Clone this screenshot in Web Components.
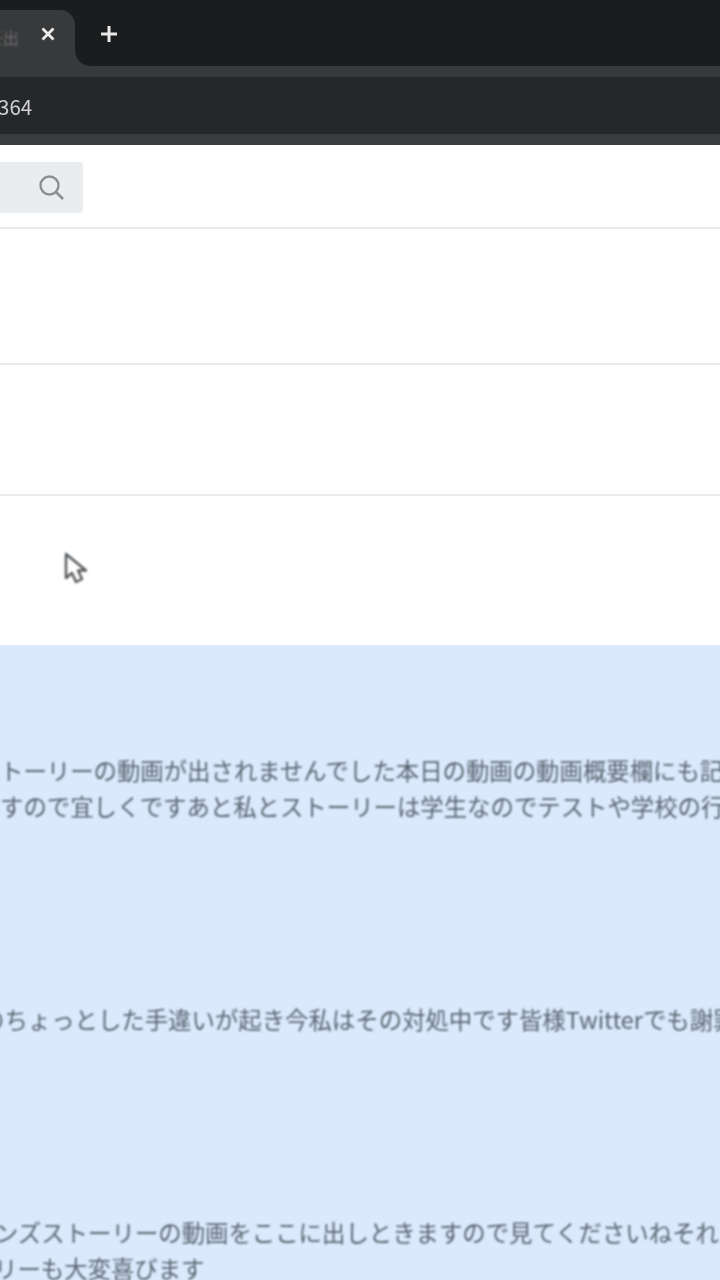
<!DOCTYPE html>
<html lang="ja">
<head>
<meta charset="utf-8">
<title>reference</title>
<style>
  html, body { margin: 0; background: #fff; }
  body {
    width: 720px;
    height: 1280px;
    overflow: hidden;
    position: relative;
    font-family: "Noto Sans CJK JP", "Noto Sans", sans-serif;
  }
</style>
</head>
<body>
<browser-chrome address="364" tab-title="任出"></browser-chrome>
<site-search></site-search>
<empty-row height="136"></empty-row>
<empty-row height="131"></empty-row>
<empty-row height="149" last></empty-row>
<message-panel>
  <message-text top="107" shift="0">トーリーの動画が出されませんでした本日の動画の動画概要欄にも記</message-text>
  <message-text top="0" shift="0">すので宜しくですあと私とストーリーは学生なのでテストや学校の行</message-text>
  <message-text top="177" shift="-19">のちょっとした手違いが起き今私はその対処中です皆様Twitterでも謝罪</message-text>
  <message-text top="177" shift="-5">ンズストーリーの動画をここに出しときますので見てくださいねそれ</message-text>
  <message-text top="0" shift="-6">リーも大変喜びます</message-text>
</message-panel>
<mouse-cursor></mouse-cursor>

<script>
class BrowserChrome extends HTMLElement {
  constructor() {
    super();
    this.attachShadow({ mode: 'open' });
  }

  connectedCallback() {
    const address = this.getAttribute('address') || '';
    const tabTitle = this.getAttribute('tab-title') || '';
    this.shadowRoot.innerHTML = `
      <style>
        :host { display: block; overflow: hidden; }
        .strip { display: flex; height: 66px; background: #1b1c1d; }
        .tab {
          position: relative;
          display: flex;
          align-items: center;
          width: 75px;
          height: 56px;
          margin-top: 10px;
          background: #38393a;
          border-radius: 0 15px 0 0;
        }
        .tab::after {
          content: '';
          position: absolute;
          left: 100%;
          bottom: 0;
          width: 15px;
          height: 15px;
          background: radial-gradient(circle at 100% 0, transparent 14px, #38393a 15.5px);
        }
        .title {
          width: 19px;
          overflow: hidden;
          white-space: nowrap;
          direction: rtl;
          font-size: 16px;
          color: #6e6f71;
          margin-bottom: 2px;
          filter: blur(0.8px);
        }
        .close { display: flex; margin-left: 21px; margin-bottom: 9px; filter: blur(0.7px); }
        .new { display: flex; margin: 24px 0 0 24px; height: 20px; filter: blur(0.7px); }
        .toolbar {
          height: 57px;
          border-top: 11px solid #38393a;
          border-bottom: 11px solid #3a3b3c;
          background: #26272a;
          display: flex;
          align-items: center;
          overflow: hidden;
          white-space: nowrap;
          font-size: 20.5px;
          color: #cfd0d0;
        }
        .toolbar span { margin-left: -2px; filter: blur(0.7px); }
      </style>
      <div class="strip">
        <div class="tab">
          <span class="title">${tabTitle}</span>
          <span class="close">
            <svg width="16" height="16" viewBox="0 0 16 16"><path d="M2.5 2.5l11 11M13.5 2.5l-11 11" stroke="#ececec" stroke-width="2.8" fill="none"/></svg>
          </span>
        </div>
        <span class="new">
          <svg width="20" height="20" viewBox="0 0 20 20"><path d="M10 2v16M2 10h16" stroke="#e8e8e8" stroke-width="3" fill="none"/></svg>
        </span>
      </div>
      <div class="toolbar"><span>${address}</span></div>
    `;
  }
}

class SiteSearch extends HTMLElement {
  constructor() {
    super();
    this.attachShadow({ mode: 'open' });
    this.shadowRoot.innerHTML = `
      <style>
        :host {
          display: block;
          box-sizing: border-box;
          height: 84px;
          padding-top: 17px;
          background: #fff;
          border-bottom: 2px solid #ebebeb;
        }
        .box {
          display: flex;
          align-items: center;
          justify-content: flex-end;
          box-sizing: border-box;
          width: 83px;
          height: 51px;
          padding: 0 18px 2px 0;
          background: #e9edf0;
          border-radius: 0 4px 4px 0;
        }
        svg { filter: blur(0.6px); }
      </style>
      <div class="box">
        <svg width="28" height="28" viewBox="0 0 28 28">
          <circle cx="12.5" cy="12.5" r="9" stroke="#8b8f92" stroke-width="2.4" fill="none"/>
          <path d="M19 19l7 7" stroke="#8b8f92" stroke-width="2.6" fill="none"/>
        </svg>
      </div>
    `;
  }
}

class EmptyRow extends HTMLElement {
  constructor() {
    super();
    this.attachShadow({ mode: 'open' });
    this.shadowRoot.innerHTML = `
      <style>
        :host {
          display: block;
          box-sizing: border-box;
          background: #fff;
          border-bottom: 2px solid #ebebeb;
        }
        :host([last]) { border-bottom: 0; }
      </style>
    `;
  }

  connectedCallback() {
    this.style.height = (this.getAttribute('height') || 100) + 'px';
  }
}

class MessagePanel extends HTMLElement {
  constructor() {
    super();
    this.attachShadow({ mode: 'open' });
    this.shadowRoot.innerHTML = `
      <style>
        :host {
          display: block;
          height: 635px;
          overflow: hidden;
          background: #dbe9fd;
        }
      </style>
      <slot></slot>
    `;
  }
}

class MessageText extends HTMLElement {
  constructor() {
    super();
    this.attachShadow({ mode: 'open' });
    this.shadowRoot.innerHTML = `
      <style>
        :host {
          display: block;
          height: 36px;
          line-height: 36px;
          white-space: nowrap;
          font-size: 23.4px;
          color: #5a6570;
          filter: blur(0.8px);
        }
      </style>
      <slot></slot>
    `;
  }

  connectedCallback() {
    this.style.marginTop = (this.getAttribute('top') || 0) + 'px';
    this.style.marginLeft = (this.getAttribute('shift') || 0) + 'px';
  }
}

// pointer sits over the page, so it is the one absolute item
class MouseCursor extends HTMLElement {
  constructor() {
    super();
    this.attachShadow({ mode: 'open' });
    this.shadowRoot.innerHTML = `
      <style>
        :host {
          display: block;
          position: absolute;
          left: 64px;
          top: 551px;
          width: 26px;
          height: 36px;
          filter: blur(1px);
        }
      </style>
      <svg width="26" height="36" viewBox="0 0 26 36">
        <path d="M2 3v24l6-5 4 9 6-3-4-8.5h8z" fill="#fff" stroke="#55585b" stroke-width="2.4" stroke-linejoin="round"/>
      </svg>
    `;
  }
}

customElements.define('browser-chrome', BrowserChrome);
customElements.define('site-search', SiteSearch);
customElements.define('empty-row', EmptyRow);
customElements.define('message-panel', MessagePanel);
customElements.define('message-text', MessageText);
customElements.define('mouse-cursor', MouseCursor);
</script>
</body>
</html>
